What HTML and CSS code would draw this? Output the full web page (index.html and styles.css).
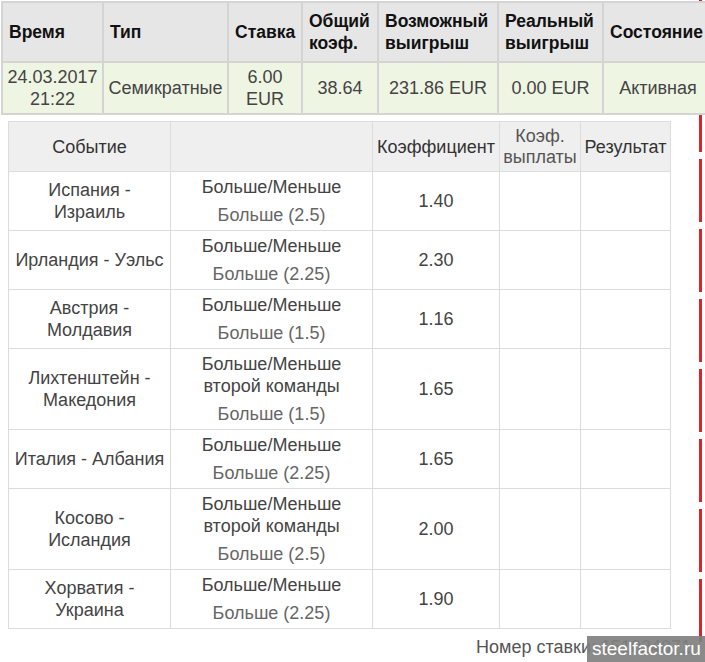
FILE: index.html
```html
<!DOCTYPE html>
<html lang="ru">
<head>
<meta charset="utf-8">
<title>Ставка</title>
<link rel="stylesheet" href="styles.css">
</head>
<body>
<div class="redline"></div>
<div class="page">
  <table class="bet">
    <colgroup>
      <col style="width:101px"><col style="width:125px"><col style="width:74px"><col style="width:76px"><col style="width:120px"><col style="width:105px"><col style="width:110px">
    </colgroup>
    <thead>
      <tr>
        <th>Время</th>
        <th>Тип</th>
        <th>Ставка</th>
        <th>Общий<br>коэф.</th>
        <th>Возможный<br>выигрыш</th>
        <th>Реальный<br>выигрыш</th>
        <th>Состояние</th>
      </tr>
    </thead>
    <tbody>
      <tr>
        <td>24.03.2017<br>21:22</td>
        <td>Семикратные</td>
        <td>6.00<br>EUR</td>
        <td>38.64</td>
        <td>231.86 EUR</td>
        <td>0.00 EUR</td>
        <td>Активная</td>
      </tr>
    </tbody>
  </table>

  <table class="events">
    <colgroup>
      <col style="width:162px"><col style="width:202px"><col style="width:127px"><col style="width:81px"><col style="width:90px">
    </colgroup>
    <thead>
      <tr>
        <th>Событие</th>
        <th></th>
        <th>Коэффициент</th>
        <th class="tight">Коэф.<br>выплаты</th>
        <th>Результат</th>
      </tr>
    </thead>
    <tbody>
      <tr>
        <td>Испания -<br>Израиль</td>
        <td><div>Больше/Меньше</div><div class="sub">Больше (2.5)</div></td>
        <td>1.40</td><td></td><td></td>
      </tr>
      <tr>
        <td>Ирландия - Уэльс</td>
        <td><div>Больше/Меньше</div><div class="sub">Больше (2.25)</div></td>
        <td>2.30</td><td></td><td></td>
      </tr>
      <tr>
        <td>Австрия -<br>Молдавия</td>
        <td><div>Больше/Меньше</div><div class="sub">Больше (1.5)</div></td>
        <td>1.16</td><td></td><td></td>
      </tr>
      <tr>
        <td>Лихтенштейн -<br>Македония</td>
        <td><div>Больше/Меньше<br>второй команды</div><div class="sub">Больше (1.5)</div></td>
        <td>1.65</td><td></td><td></td>
      </tr>
      <tr>
        <td>Италия - Албания</td>
        <td><div>Больше/Меньше</div><div class="sub">Больше (2.25)</div></td>
        <td>1.65</td><td></td><td></td>
      </tr>
      <tr>
        <td>Косово -<br>Исландия</td>
        <td><div>Больше/Меньше<br>второй команды</div><div class="sub">Больше (2.5)</div></td>
        <td>2.00</td><td></td><td></td>
      </tr>
      <tr>
        <td>Хорватия -<br>Украина</td>
        <td><div>Больше/Меньше</div><div class="sub">Больше (2.25)</div></td>
        <td>1.90</td><td></td><td></td>
      </tr>
    </tbody>
  </table>

  <div class="number">Номер ставки: 151024071</div>
</div>
<div class="watermark">steelfactor.ru</div>
</body>
</html>
```

FILE: styles.css
```css
html, body {
  margin: 0;
  padding: 0;
  background: #ffffff;
  overflow: hidden;
  width: 705px;
  height: 662px;
}
body {
  font-family: "Liberation Sans", Arial, sans-serif;
  color: #444;
  position: relative;
}
.redline {
  position: absolute;
  left: 699px;
  top: 0;
  width: 3px;
  height: 646px;
  background-image: repeating-linear-gradient(to bottom, #d7262b 0px, #d7262b 12px, transparent 12px, transparent 19px, #d7262b 19px, #d7262b 70px);
  background-size: 3px 70px;
}
.page {
  position: relative;
  padding: 1px 0 0 1px;
}
table {
  border-collapse: collapse;
  table-layout: fixed;
}
.bet {
  width: 711px;
  font-size: 18px;
  line-height: 22px;
  background: #fff;
}
.bet th, .bet td {
  border: 2px solid #d4d4d4;
}
.bet th {
  background: #e6e6e6;
  color: #111;
  font-weight: bold;
  font-size: 17.5px;
  height: 58px;
  padding: 0 6px;
  text-align: left;
  vertical-align: middle;
  white-space: nowrap;
}
.bet td {
  background: #eef5e3;
  color: #444;
  height: 50px;
  padding: 0 3px;
  text-align: center;
  vertical-align: middle;
  white-space: nowrap;
}
.events {
  margin: 6px 0 0 7px;
  width: 662px;
  font-size: 18px;
  line-height: 22px;
  background: #fff;
}
.events th, .events td {
  border: 1px solid #dcdcdc;
  text-align: center;
  vertical-align: middle;
  padding: 4px 2px;
}
.events th {
  background: #efefef;
  font-weight: normal;
  color: #333;
  height: 49px;
  padding: 0 2px;
}
.events th.tight {
  line-height: 21px;
  color: #555;
}
.events td {
  color: #444;
}
.events .sub {
  margin-top: 6px;
  color: #666;
}
.number {
  margin: 7px 0 0 475px;
  white-space: nowrap;
  font-size: 18px;
  line-height: 22px;
  color: #555;
}
.watermark {
  position: absolute;
  left: 587px;
  top: 636px;
  width: 118px;
  height: 26px;
  background: rgba(128, 128, 128, 0.92);
  color: #fff;
  font-size: 19px;
  line-height: 26px;
  padding-left: 5px;
  box-sizing: border-box;
  white-space: nowrap;
  overflow: hidden;
}
```
